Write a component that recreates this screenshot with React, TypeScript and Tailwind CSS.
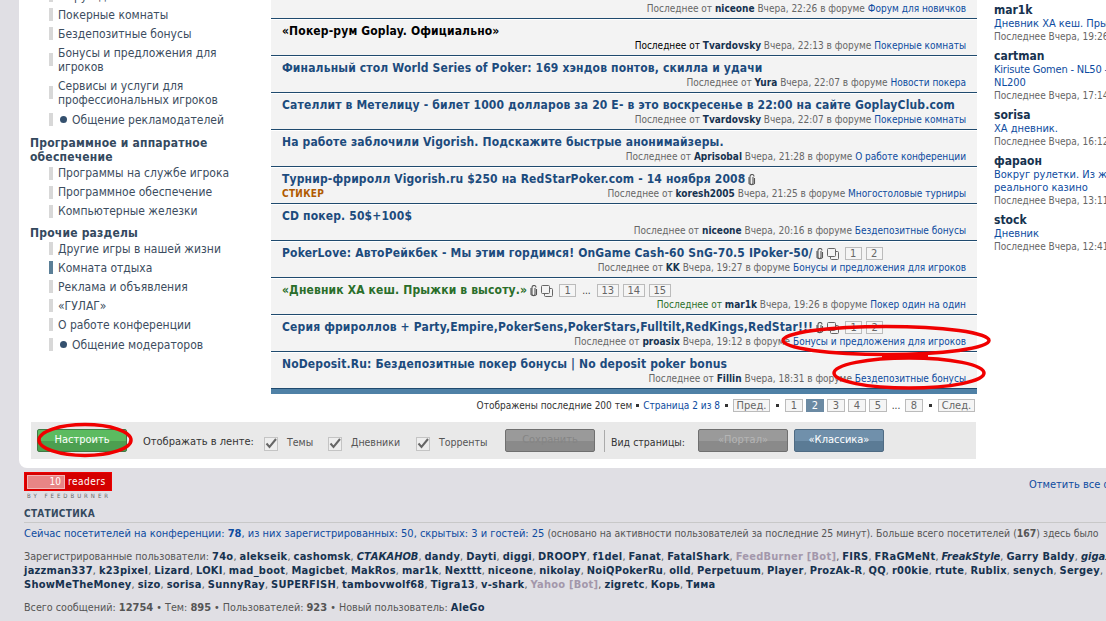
const FONT = "font-['DejaVu_Sans_Condensed','DejaVu_Sans',sans-serif]";

type Item = { label: React.ReactNode; dot?: boolean; active?: boolean };
type Topic = {
  title: string;
  by: string;
  time: string;
  forum: string;
  clip?: boolean;
  copy?: boolean;
  pages?: string[];
  tone?: "black" | "green";
  sticker?: boolean;
};

const GROUP_ONE: Item[] = [
  { label: "Форум для новичков" },
  { label: "Покерные комнаты" },
  { label: "Бездепозитные бонусы" },
  { label: <>Бонусы и предложения для<br />игроков</> },
  { label: <>Сервисы и услуги для<br />профессиональных игроков</> },
  { label: "Общение рекламодателей", dot: true },
];
const GROUP_TWO: Item[] = [
  { label: "Программы на службе игрока" },
  { label: "Программное обеспечение" },
  { label: "Компьютерные железки" },
];
const GROUP_THREE: Item[] = [
  { label: "Другие игры в нашей жизни" },
  { label: "Комната отдыха", active: true },
  { label: "Реклама и объявления" },
  { label: "«ГУЛАГ»" },
  { label: "О работе конференции" },
  { label: "Общение модераторов", dot: true },
];

const TOPICS: Topic[] = [
  { title: "«Покер-рум Goplay. Официально»", by: "Tvardovsky", time: "Вчера, 22:13", forum: "Покерные комнаты", tone: "black" },
  { title: "Финальный стол World Series of Poker: 169 хэндов понтов, скилла и удачи", by: "Yura", time: "Вчера, 22:07", forum: "Новости покера" },
  { title: "Сателлит в Метелицу - билет 1000 долларов за 20 Е- в это воскресенье в 22:00 на сайте GoplayClub.com", by: "Tvardovsky", time: "Вчера, 22:07", forum: "Покерные комнаты" },
  { title: "На работе заблочили Vigorish. Подскажите быстрые анонимайзеры.", by: "Aprisobal", time: "Вчера, 21:28", forum: "О работе конференции" },
  { title: "Турнир-фриролл Vigorish.ru $250 на RedStarPoker.com - 14 ноября 2008", by: "koresh2005", time: "Вчера, 21:25", forum: "Многостоловые турниры", clip: true, sticker: true },
  { title: "CD покер. 50$+100$", by: "niceone", time: "Вчера, 20:16", forum: "Бездепозитные бонусы" },
  { title: "PokerLove: АвтоРейкбек - Мы этим гордимся! OnGame Cash-60 SnG-70.5 IPoker-50/", by: "KK", time: "Вчера, 19:27", forum: "Бонусы и предложения для игроков", clip: true, copy: true, pages: ["1", "2"] },
  { title: "«Дневник ХА кеш. Прыжки в высоту.»", by: "mar1k", time: "Вчера, 19:26", forum: "Покер один на один", clip: true, copy: true, pages: ["1", "...", "13", "14", "15"], tone: "green" },
  { title: "Серия фрироллов + Party,Empire,PokerSens,PokerStars,Fulltilt,RedKings,RedStar!!!", by: "proasix", time: "Вчера, 19:12", forum: "Бонусы и предложения для игроков", clip: true, copy: true, pages: ["1", "2"] },
  { title: "NoDeposit.Ru: Бездепозитные покер бонусы | No deposit poker bonus", by: "Fillin", time: "Вчера, 18:31", forum: "Бездепозитные бонусы" },
];

const BLOGS = [
  { name: "mar1k", title: <>Дневник ХА кеш. Прыжки в высоту.</>, time: "Вчера, 19:26" },
  { name: "cartman", title: <><span className="tracking-[-0.2px]">Kirisute Gomen - NL50 -</span><br />NL200</>, time: "Вчера, 17:14" },
  { name: "sorisa", title: <>ХА дневник.</>, time: "Вчера, 16:12" },
  { name: "фараон", title: <>Вокруг рулетки. Из жизни<br />реального казино</>, time: "Вчера, 13:11" },
  { name: "stock", title: <>Дневник</>, time: "Вчера, 12:41" },
];

const U = ({ children }: { children: React.ReactNode }) => (
  <b className="font-bold text-[11px] tracking-[0.25px] text-[#16324f]">{children}</b>
);
const Bot = ({ children }: { children: React.ReactNode }) => (
  <b className="font-bold text-[11px] tracking-[0.25px] text-[#a397ab]">{children}</b>
);

function users(names: string[]) {
  return names.map((name, i) => (
    <span key={name}>
      <U>{name}</U>
      {i < names.length - 1 ? ", " : ""}
    </span>
  ));
}

function Clip() {
  return (
    <svg width="8" height="12" viewBox="0 0 8 12" fill="none" stroke="#555" strokeWidth="1.1" className="shrink-0">
      <path d="M5 3v6a1.500 1.500 0 0 1-3 0V2.500a2 2 0 0 1 4 0" />
      <path d="M1 3v6.500a3 2 0 0 0 5.500 0V4" />
    </svg>
  );
}

function CopyIcon() {
  return (
    <svg width="12" height="12" viewBox="0 0 12 12" fill="#f3f3f3" stroke="#666" className="shrink-0">
      <rect x="3.500" y="3.500" width="8" height="8" rx="1" />
      <rect x="0.500" y="0.500" width="8" height="8" rx="1" />
    </svg>
  );
}

function PageBox({ n, w = "w-[18px]", active }: { n: string; w?: string; active?: boolean }) {
  return (
    <span
      className={`${w} h-[13px] flex items-center justify-center border text-[11px] leading-none ${
        active ? "bg-[#6b8aa3] border-[#6b8aa3] text-white" : "bg-[#f5f5f5] border-[#bbbbbb] text-[#666]"
      }`}
    >
      {n}
    </span>
  );
}

function SideItem({ item }: { item: Item }) {
  return (
    <li className={`flex items-center gap-[5px] ml-[19px] ${item.dot ? "py-[3.500px]" : "py-[2.500px]"}`}>
      <span className={`w-[4px] h-[13px] shrink-0 ${item.active ? "bg-[#5b7f97]" : "bg-[#d8d8d8]"}`} />
      {item.dot && <span className="w-[7px] h-[7px] rounded-full bg-[#34506e] ml-[2px] shrink-0" />}
      <span className="text-[12px] leading-[14px] text-[#3c4d60]">{item.label}</span>
    </li>
  );
}

function SideHead({ children, tight }: { children: React.ReactNode; tight?: boolean }) {
  return (
    <h3 className={`mt-[5.500px] text-[12px] leading-[14px] font-bold tracking-[0.2px] text-[#34495e] ${tight ? "-mb-[1px]" : ""}`}>
      {children}
    </h3>
  );
}

function TopicRow({ t }: { t: Topic }) {
  const color = t.tone === "green" ? "text-[#2a6e2a]" : t.tone === "black" ? "text-black" : "text-[#1c4b7d]";
  const metaColor = t.tone === "green" ? "text-[#2a6e2a]" : t.tone === "black" ? "text-black" : "text-[#666]";
  return (
    <div className="h-[37px] bg-[#f3f3f3] border-t border-t-white border-b border-b-[#1f4a6e] px-[11px] pt-[4px] flex flex-col">
      <div className="flex items-center gap-[3px] h-[15px] whitespace-nowrap">
        <span className={`text-[12px] leading-[15px] font-bold tracking-[0.15px] ${color}`}>{t.title}</span>
        {t.clip && <Clip />}
        {t.copy && <CopyIcon />}
        {t.pages && (
          <span className="flex items-center gap-[4px] ml-[3px]">
            {t.pages.map((p, i) =>
              p === "..." ? (
                <span key={i} className="text-[10px] text-[#333] px-[2px]">...</span>
              ) : (
                <PageBox key={i} n={p} w={p.length > 1 ? "w-[22px]" : "w-[17px]"} />
              )
            )}
          </span>
        )}
      </div>
      <div className="flex items-center justify-between h-[14px] text-[10px] leading-[14px] whitespace-nowrap">
        <span className="font-bold text-[#b05a00] tracking-[0.3px]">{t.sticker ? "СТИКЕР" : ""}</span>
        <span className="text-[#666]">
          <span className={metaColor}>Последнее от</span> <b className="text-[#16324f]">{t.by}</b> {t.time} в форуме{" "}
          <span className="text-[#0d4ba0]">{t.forum}</span>
        </span>
      </div>
    </div>
  );
}

function ToolButton({ children, kind, dim }: { children: string; kind: "green" | "gray" | "blue"; dim?: boolean }) {
  const look =
    kind === "green"
      ? "border-[#3f7a45] text-white bg-[linear-gradient(#5cbb60_50%,#4c9f50_50%)]"
      : kind === "blue"
        ? "border-[#4f6b83] text-white bg-[linear-gradient(#7090ab_50%,#5b7b95_50%)]"
        : `border-[#6f6f6f] ${dim ? "text-[#858585]" : "text-[#b5b5b5]"} bg-[linear-gradient(#9a9a9a_50%,#8a8a8a_50%)]`;
  return (
    <span className={`w-[90px] h-[23px] rounded-[2px] border flex items-center justify-center text-[11px] ${look}`}>
      {children}
    </span>
  );
}

function Check({ label, w }: { label: string; w: string }) {
  return (
    <span className="flex items-center gap-[9px] text-[10.500px] text-[#555]">
      <span className="w-[14px] h-[14px] border border-[#c4c4c4] bg-[#eeeeee] flex items-center justify-center">
        <svg width="12" height="11" viewBox="0 0 12 11" fill="none" stroke="#666" strokeWidth="2">
          <path d="M1.500 5.500 4.500 9 11 1" />
        </svg>
      </span>
      <span className={`-mt-[2px] ${w}`}>{label}</span>
    </span>
  );
}

function Ellipses() {
  return (
    <svg className="absolute left-0 top-0 pointer-events-none" width="1106" height="621" fill="none" stroke="#f00000" strokeWidth="3.500">
      <ellipse cx="886" cy="340.500" rx="103" ry="14" />
      <ellipse cx="909" cy="373" rx="75" ry="15" />
      <ellipse cx="85" cy="440" rx="46" ry="15.500" />
      <path d="M882 356h46" strokeWidth="4" />
    </svg>
  );
}

export default function App() {
  return (
    <div className={`${FONT} relative w-[1106px] h-[621px] overflow-hidden bg-[#e0dfe4]`}>
      <div className="ml-[19px] w-[1087px] h-[468px] bg-white rounded-bl-[8px] flex flex-col">
        <div className="flex h-[422px] items-start">
          {/* left forum tree */}
          <aside className="w-[252px] shrink-0 pl-[11px] -mt-[14px]">
            <ul>
              {GROUP_ONE.map((item, i) => <SideItem key={i} item={item} />)}
            </ul>
            <SideHead>Программное и аппаратное<br />обеспечение</SideHead>
            <ul>
              {GROUP_TWO.map((item, i) => <SideItem key={i} item={item} />)}
            </ul>
            <SideHead tight>Прочие разделы</SideHead>
            <ul>
              {GROUP_THREE.map((item, i) => <SideItem key={i} item={item} />)}
            </ul>
          </aside>

          {/* topic feed */}
          <main className="w-[706px] shrink-0">
            <div className="h-[19px] bg-[#f3f3f3] border-b border-b-[#1f4a6e] px-[11px] flex items-center justify-end pb-[1px] text-[10px] whitespace-nowrap text-[#666]">
              <span>
                Последнее от <b className="text-[#16324f]">niceone</b> Вчера, 22:26 в форуме{" "}
                <span className="text-[#0d4ba0]">Форум для новичков</span>
              </span>
            </div>
            {TOPICS.map((t) => <TopicRow key={t.title} t={t} />)}
            <div className="h-[5px] bg-[#4f81a6]" />
            <div className="mt-[5px] flex items-center justify-end h-[13px] text-[10px] whitespace-nowrap text-[#333] pr-[2px]">
              <span>Отображены последние 200 тем</span>
              <span className="w-[3px] h-[3px] bg-[#333] mx-[4px]" />
              <span className="text-[#0d4ba0]">Страница 2 из 8</span>
              <span className="w-[3px] h-[3px] bg-[#333] mx-[5px]" />
              <PageBox n="Пред." w="w-[37px]" />
              <span className="w-[3px] h-[3px] bg-[#333] mx-[6px]" />
              <span className="flex items-center gap-[3px]">
                <PageBox n="1" />
                <PageBox n="2" active />
                <PageBox n="3" />
                <PageBox n="4" />
                <PageBox n="5" />
              </span>
              <span className="w-[18px] text-center">...</span>
              <PageBox n="8" />
              <span className="w-[3px] h-[3px] bg-[#333] mx-[6px]" />
              <PageBox n="След." w="w-[37px]" />
            </div>
          </main>

          {/* latest diaries */}
          <aside className="ml-[17px] whitespace-nowrap text-[11px] leading-[13px]">
            {BLOGS.map((b) => (
              <div key={b.name} className="mb-[7px] first:mt-[4px]">
                <b className="block text-[12px] leading-[13px] text-[#16324f]">{b.name}</b>
                <div className="text-[#0d4ba0]">{b.title}</div>
                <div className="text-[10px] text-[#666]">Последнее {b.time}</div>
              </div>
            ))}
          </aside>
        </div>

        {/* feed settings */}
        <div className="ml-[12px] w-[945px] h-[37px] bg-[#e9e9e9] flex items-center pl-[6px] whitespace-nowrap text-[11px] text-[#333]">
          <ToolButton kind="green">Настроить</ToolButton>
          <span className="ml-[16px] mt-[4px] w-[110px]">Отображать в ленте:</span>
          <span className="ml-[11px] mt-[6px] flex gap-[16px]">
            <Check label="Темы" w="w-[25px]" />
            <Check label="Дневники" w="w-[49px]" />
            <Check label="Торренты" w="w-[49px]" />
          </span>
          <span className="ml-[17px]"><ToolButton kind="gray" dim>Сохранить</ToolButton></span>
          <span className="ml-[9px] mr-[6px] w-px h-[22px] bg-[#aaaaaa]" />
          <span className="w-[75px] mt-[4px] text-[10.500px]">Вид страницы:</span>
          <span className="ml-[12px] flex gap-[6px]">
            <ToolButton kind="gray">«Портал»</ToolButton>
            <ToolButton kind="blue">«Классика»</ToolButton>
          </span>
        </div>
      </div>

      {/* feedburner counter and stats */}
      <div className="pl-[24px] pt-[4px]">
        <div className="flex items-start justify-between h-[27px]">
          <div>
            <div className="w-[88px] h-[19px] bg-[#d40000] border border-[#ee0000] flex items-center pl-[2px] gap-[3px] text-[10px] text-white">
              <span className="w-[38px] h-[14px] bg-[#e88585] border border-[#f3b5b5] flex items-center justify-end pr-[3px] leading-none">10</span>
              <span className="tracking-[0.5px]">readers</span>
            </div>
            <div className="text-[6px] leading-[8px] pl-[3px] mt-[1px] tracking-[3px] text-[#666] whitespace-nowrap">BY FEEDBURNER</div>
          </div>
          <span className="text-[11px] text-[#0d4ba0] whitespace-nowrap mt-[5px] w-[77px]">Отметить все форумы</span>
        </div>
        <h4 className="mt-[9px] text-[10px] leading-[12px] font-bold tracking-[0.3px] text-[#34495e]">СТАТИСТИКА</h4>
        <div className="mt-[2px] h-px bg-[#c8c8c8]" />
        <div className="mt-[3px] h-[14px] text-[10.400px] leading-[14px] whitespace-nowrap text-[#555]">
          <span className="text-[11px] text-[#0d4ba0]">Сейчас посетителей на конференции: <b>78</b>, из них зарегистрированных: 50, скрытых: 3 и гостей: 25</span>{" "}
          (основано на активности пользователей за последние 25 минут). Больше всего посетителей (<b>167</b>) здесь было
        </div>
        <div className="mt-[10px] text-[10.700px] leading-[14px] whitespace-nowrap text-[#555]">
          <div className="h-[14px]">
            Зарегистрированные пользователи: {users(["74o", "alekseik", "cashomsk"])}, <i className="font-bold text-[11px] text-[#16324f]">СТАКАНОВ</i>,{" "}
            {users(["dandy", "Dayti", "diggi", "DROOPY", "f1del", "Fanat", "FatalShark"])}, <Bot>FeedBurner [Bot]</Bot>, {users(["FIRS", "FRaGMeNt"])},{" "}
            <i className="font-bold text-[11px] text-[#16324f]">FreakStyle</i>, <U>Garry Baldy</U>, <i className="font-bold text-[11px] text-[#16324f]">gigax</i>
          </div>
          <div className="h-[14px]">
            {users(["jazzman337", "k23pixel", "Lizard", "LOKI", "mad_boot", "Magicbet", "MakRos", "mar1k", "Nexttt", "niceone", "nikolay", "NoiQPokerRu", "olld", "Perpetuum", "Player", "ProzAk-R", "QQ", "r00kie", "rtute", "Rublix", "senych", "Sergey"])},
          </div>
          <div className="h-[14px]">
            {users(["ShowMeTheMoney", "sizo", "sorisa", "SunnyRay", "SUPERFISH", "tambovwolf68", "Tigra13", "v-shark"])}, <Bot>Yahoo [Bot]</Bot>, {users(["zigretc", "Корь", "Тима"])}
          </div>
        </div>
        <div className="mt-[9px] h-[14px] text-[10.700px] leading-[14px] whitespace-nowrap text-[#555]">
          Всего сообщений: <b className="text-[11px]">12754</b> • Тем: <b className="text-[11px]">895</b> • Пользователей: <b className="text-[11px]">923</b> • Новый пользователь: <U>AleGo</U>
        </div>
      </div>

      <Ellipses />
    </div>
  );
}
